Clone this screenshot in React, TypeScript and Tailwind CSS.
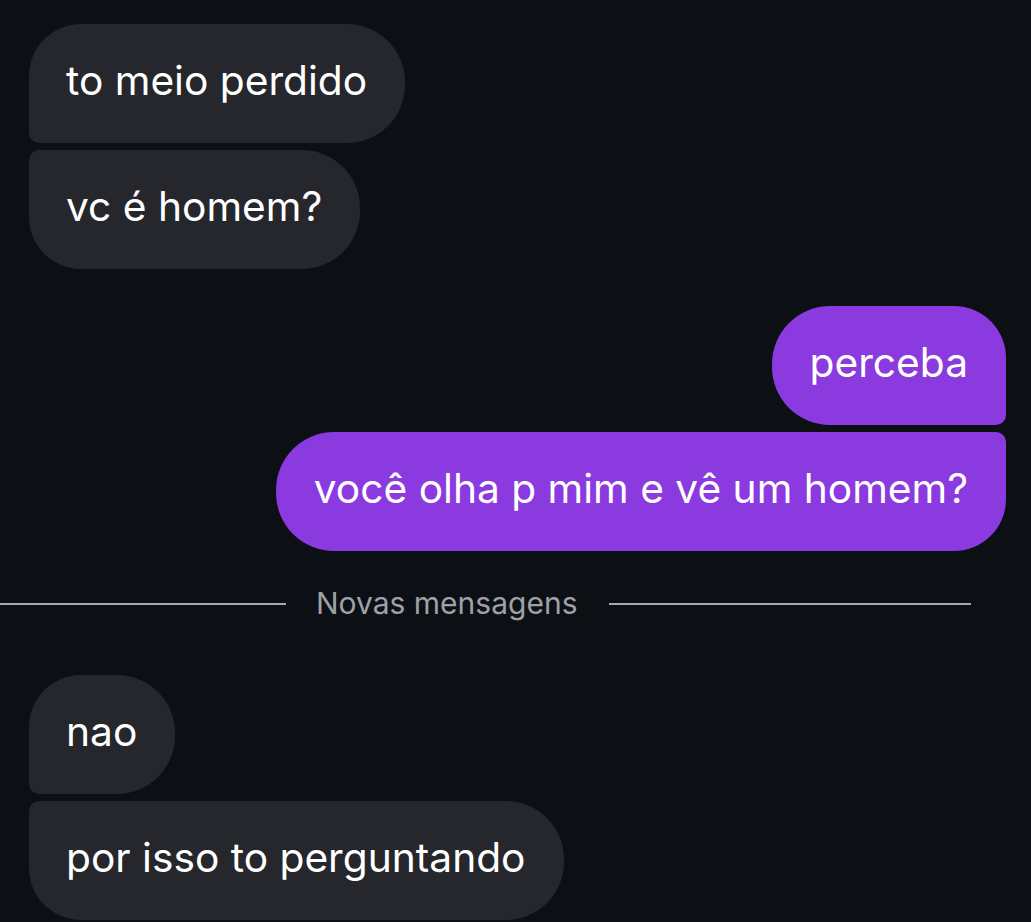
import React from "react";

type Msg = { text: string; pos: "first" | "last" };

const font = { fontFamily: "Inter, 'Noto Sans', sans-serif" };

function Incoming({ text, pos }: Msg) {
  const corners =
    pos === "first"
      ? "rounded-tl-[52px] rounded-bl-[10px]"
      : "rounded-tl-[10px] rounded-bl-[52px]";
  return (
    <div className="flex justify-start">
      <div
        className={`h-[119px] flex items-center pl-[37px] pr-[38px] pb-[4px] bg-[#25272c] text-white text-[40.7px] leading-none rounded-r-[58px] ${corners}`}
      >
        {text}
      </div>
    </div>
  );
}

function Outgoing({ text, pos }: Msg) {
  const corners =
    pos === "first"
      ? "rounded-tr-[52px] rounded-br-[10px]"
      : "rounded-tr-[10px] rounded-br-[52px]";
  return (
    <div className="flex justify-end">
      <div
        className={`h-[119px] flex items-center px-[38px] pb-[4px] bg-[#8a3adf] text-white text-[40.7px] leading-none rounded-l-[58px] ${corners}`}
      >
        {text}
      </div>
    </div>
  );
}

export default function App() {
  return (
    <div className="w-[1031px] h-[922px] overflow-hidden bg-[#0c0f14]" style={font}>
      <div className="flex flex-col pt-[24px] pl-[29px] pr-[25px]">
        {/* them */}
        <div className="flex flex-col gap-[7px]">
          <Incoming text="to meio perdido" pos="first" />
          <Incoming text="vc é homem?" pos="last" />
        </div>

        {/* me */}
        <div className="flex flex-col gap-[7px] mt-[37px]">
          <Outgoing text="perceba" pos="first" />
          <Outgoing text="você olha p mim e vê um homem?" pos="last" />
        </div>

        {/* divider */}
        <div className="-ml-[29px] mt-[33px] mb-[51px] h-[40px] flex items-center">
          <div className="w-[286px] h-[2px] bg-[#a5a7ad]" />
          <span className="ml-[30px] mr-[32px] text-[30px] text-[#9ea1a8] leading-none pb-[2px]">Novas mensagens</span>
          <div className="w-[362px] h-[2px] bg-[#a5a7ad]" />
        </div>

        {/* them */}
        <div className="flex flex-col gap-[7px]">
          <Incoming text="nao" pos="first" />
          <Incoming text="por isso to perguntando" pos="last" />
        </div>
      </div>
    </div>
  );
}
